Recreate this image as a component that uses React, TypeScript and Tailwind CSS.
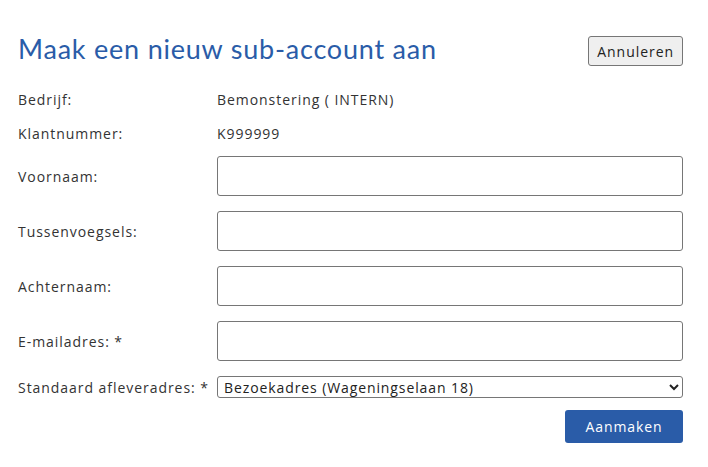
import React from 'react';

const fields = ['Voornaam:', 'Tussenvoegsels:', 'Achternaam:', 'E-mailadres: *'];

export default function App() {
  return (
    <div className="min-h-screen bg-white pl-[18px] pr-[25px] pt-[31px] text-[14px] tracking-[0.95px] text-[#333] [font-family:'Open_Sans',sans-serif]">
      <div className="flex items-center justify-between">
        <h1 className="text-[27px] leading-[36px] tracking-[0.78px] text-[#2a5ca8] [font-family:Lato,sans-serif]">
          Maak een nieuw sub-account aan
        </h1>
        <button className="mt-[4px] h-[30px] rounded-[3px] border border-[#767676] bg-[#efefef] px-[8px] text-[14px] text-[#222]">
          Annuleren
        </button>
      </div>

      <div className="mt-[16px] grid grid-cols-[199px_1fr] items-center">
        <div className="h-[34px] leading-[34px]">Bedrijf:</div>
        <div className="h-[34px] leading-[34px]">Bemonstering ( INTERN)</div>
        <div className="h-[34px] leading-[34px]">Klantnummer:</div>
        <div className="h-[34px] leading-[34px]">K999999</div>
      </div>

      <div className="mt-[5px] flex flex-col gap-[15px]">
        {fields.map((f) => (
          <div key={f} className="grid grid-cols-[199px_1fr] items-center">
            <label>{f}</label>
            <input className="h-[40px] rounded-[3px] border border-[#767676] bg-white px-2" />
          </div>
        ))}
        <div className="grid grid-cols-[199px_1fr] items-center">
          <label>Standaard afleveradres: *</label>
          <select className="h-[22px] rounded-[3px] border border-[#767676] bg-white pl-[2px] text-[14px] tracking-[0.9px] text-[#222]">
            <option>Bezoekadres (Wageningselaan 18)</option>
          </select>
        </div>
      </div>

      <div className="mt-[12px] flex justify-end">
        <button className="h-[33px] w-[118px] rounded-[3px] bg-[#2a5ca8] text-[14px] tracking-[0.9px] text-white">
          Aanmaken
        </button>
      </div>
    </div>
  );
}
